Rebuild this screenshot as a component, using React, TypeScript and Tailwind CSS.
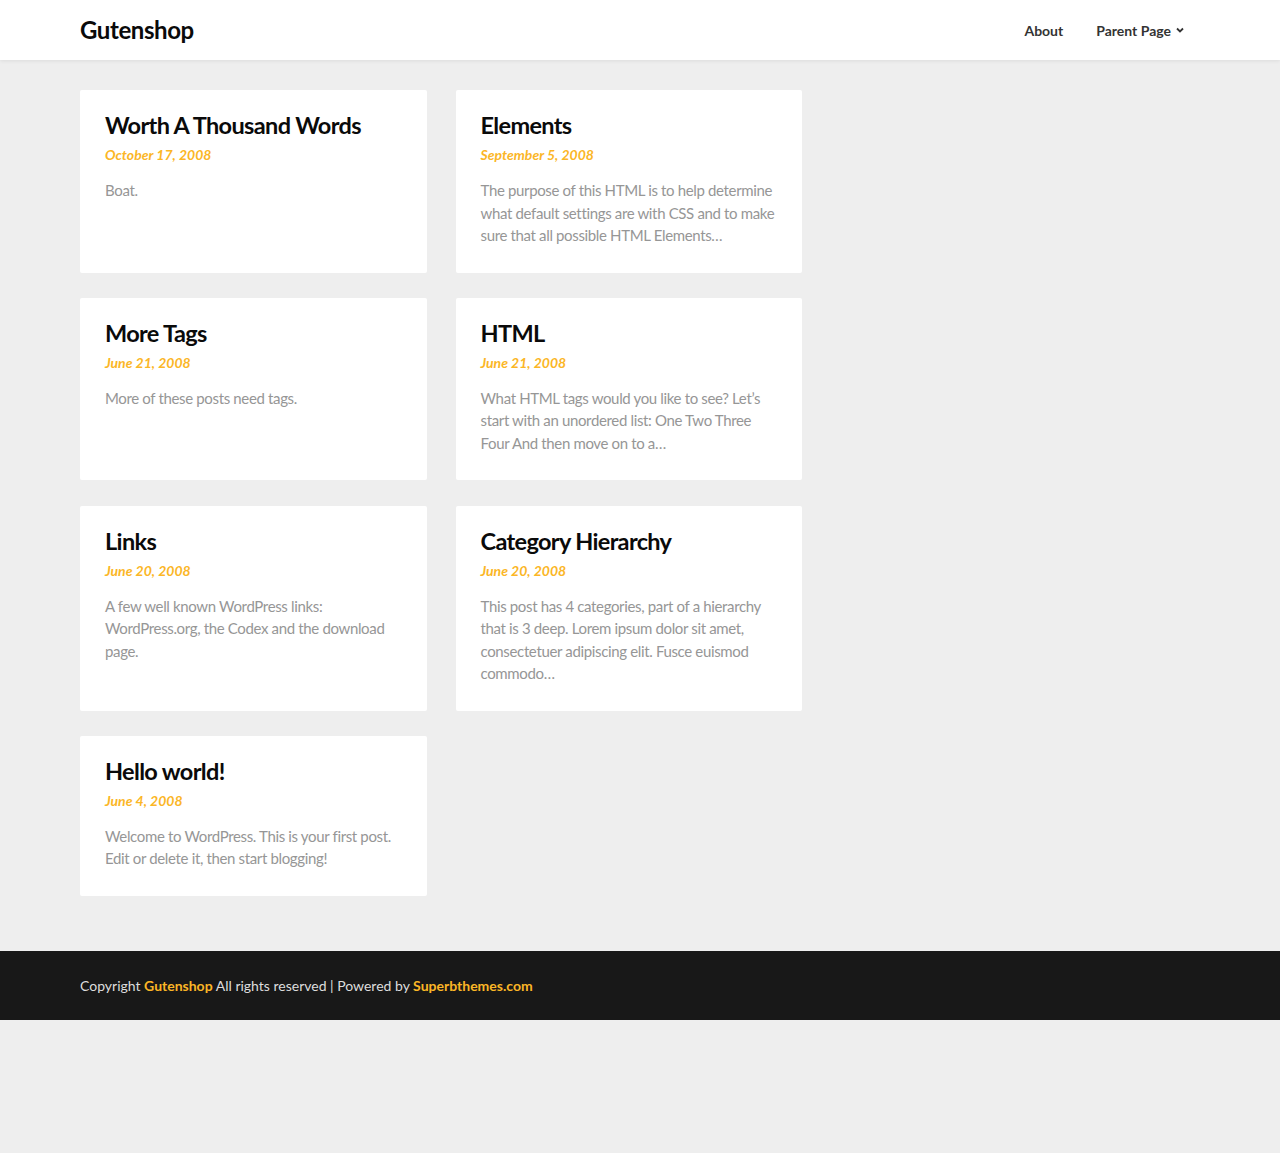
import React from 'react';

type Post = {
  title: string;
  date: string;
  excerpt: string;
};

const posts: Post[] = [
  { title: 'Worth A Thousand Words', date: 'October 17, 2008', excerpt: 'Boat.' },
  {
    title: 'Elements',
    date: 'September 5, 2008',
    excerpt:
      'The purpose of this HTML is to help determine what default settings are with CSS and to make sure that all possible HTML Elements…',
  },
  { title: 'More Tags', date: 'June 21, 2008', excerpt: 'More of these posts need tags.' },
  {
    title: 'HTML',
    date: 'June 21, 2008',
    excerpt:
      'What HTML tags would you like to see? Let’s start with an unordered list: One Two Three Four And then move on to a…',
  },
  {
    title: 'Links',
    date: 'June 20, 2008',
    excerpt: 'A few well known WordPress links: WordPress.org, the Codex and the download page.',
  },
  {
    title: 'Category Hierarchy',
    date: 'June 20, 2008',
    excerpt:
      'This post has 4 categories, part of a hierarchy that is 3 deep. Lorem ipsum dolor sit amet, consectetuer adipiscing elit. Fusce euismod commodo…',
  },
  {
    title: 'Hello world!',
    date: 'June 4, 2008',
    excerpt: 'Welcome to WordPress. This is your first post. Edit or delete it, then start blogging!',
  },
];

const PostCard: React.FC<{ post: Post }> = ({ post }) => (
  <article className="bg-white rounded-[2px] px-[25px] pt-[20px] pb-[26px]">
    <h2 className="text-[23.5px] leading-[30px] font-bold text-[#0a0a0a] tracking-[-0.65px]">
      <a href="#">{post.title}</a>
    </h2>
    <div className="mt-[5px] text-[14px] leading-[20px] italic font-bold text-[#fbb626]">
      {post.date}
    </div>
    <p className="mt-[14px] text-[15px] leading-[22.5px] text-[#969696] tracking-[-0.35px]">
      {post.excerpt}
    </p>
  </article>
);

const App: React.FC = () => {
  return (
    <div className="min-h-[1153px] bg-[#eeeeee] font-['Lato','Liberation_Sans',sans-serif]">
      <header className="bg-white h-[60px] shadow-[0_1px_4px_rgba(0,0,0,0.08)] relative z-10">
        <div className="mx-[80px] h-full flex items-center justify-between">
          <a href="#" className="text-[24px] leading-[30px] font-bold text-[#0a0a0a] tracking-[-0.4px]">Gutenshop</a>
          <nav className="flex items-center gap-[33px] pr-[15px] text-[14px] font-bold text-[#333]">
            <a href="#">About</a>
            <a href="#" className="flex items-center gap-[4px]">
              Parent Page
              <svg width="10" height="10" viewBox="0 0 10 10" fill="none" stroke="currentColor" strokeWidth="1.8">
                <path d="M2 3.5l3 3 3-3" />
              </svg>
            </a>
          </nav>
        </div>
      </header>

      <main className="mx-[80px] pt-[30px] pb-[55px]">
        <div className="w-[722px] grid grid-cols-2 gap-x-[29px] gap-y-[25.25px]">
          {posts.map((p) => (
            <PostCard key={p.title} post={p} />
          ))}
        </div>
      </main>

      <footer className="bg-[#181818] h-[69px] flex items-center">
        <p className="mx-[80px] text-[14px] text-[#dddddd]">
          Copyright <a href="#" className="font-bold text-[#fbb626]">Gutenshop</a> All rights reserved | Powered by{' '}
          <a href="#" className="font-bold text-[#fbb626]">Superbthemes.com</a>
        </p>
      </footer>
    </div>
  );
};

export default App;
